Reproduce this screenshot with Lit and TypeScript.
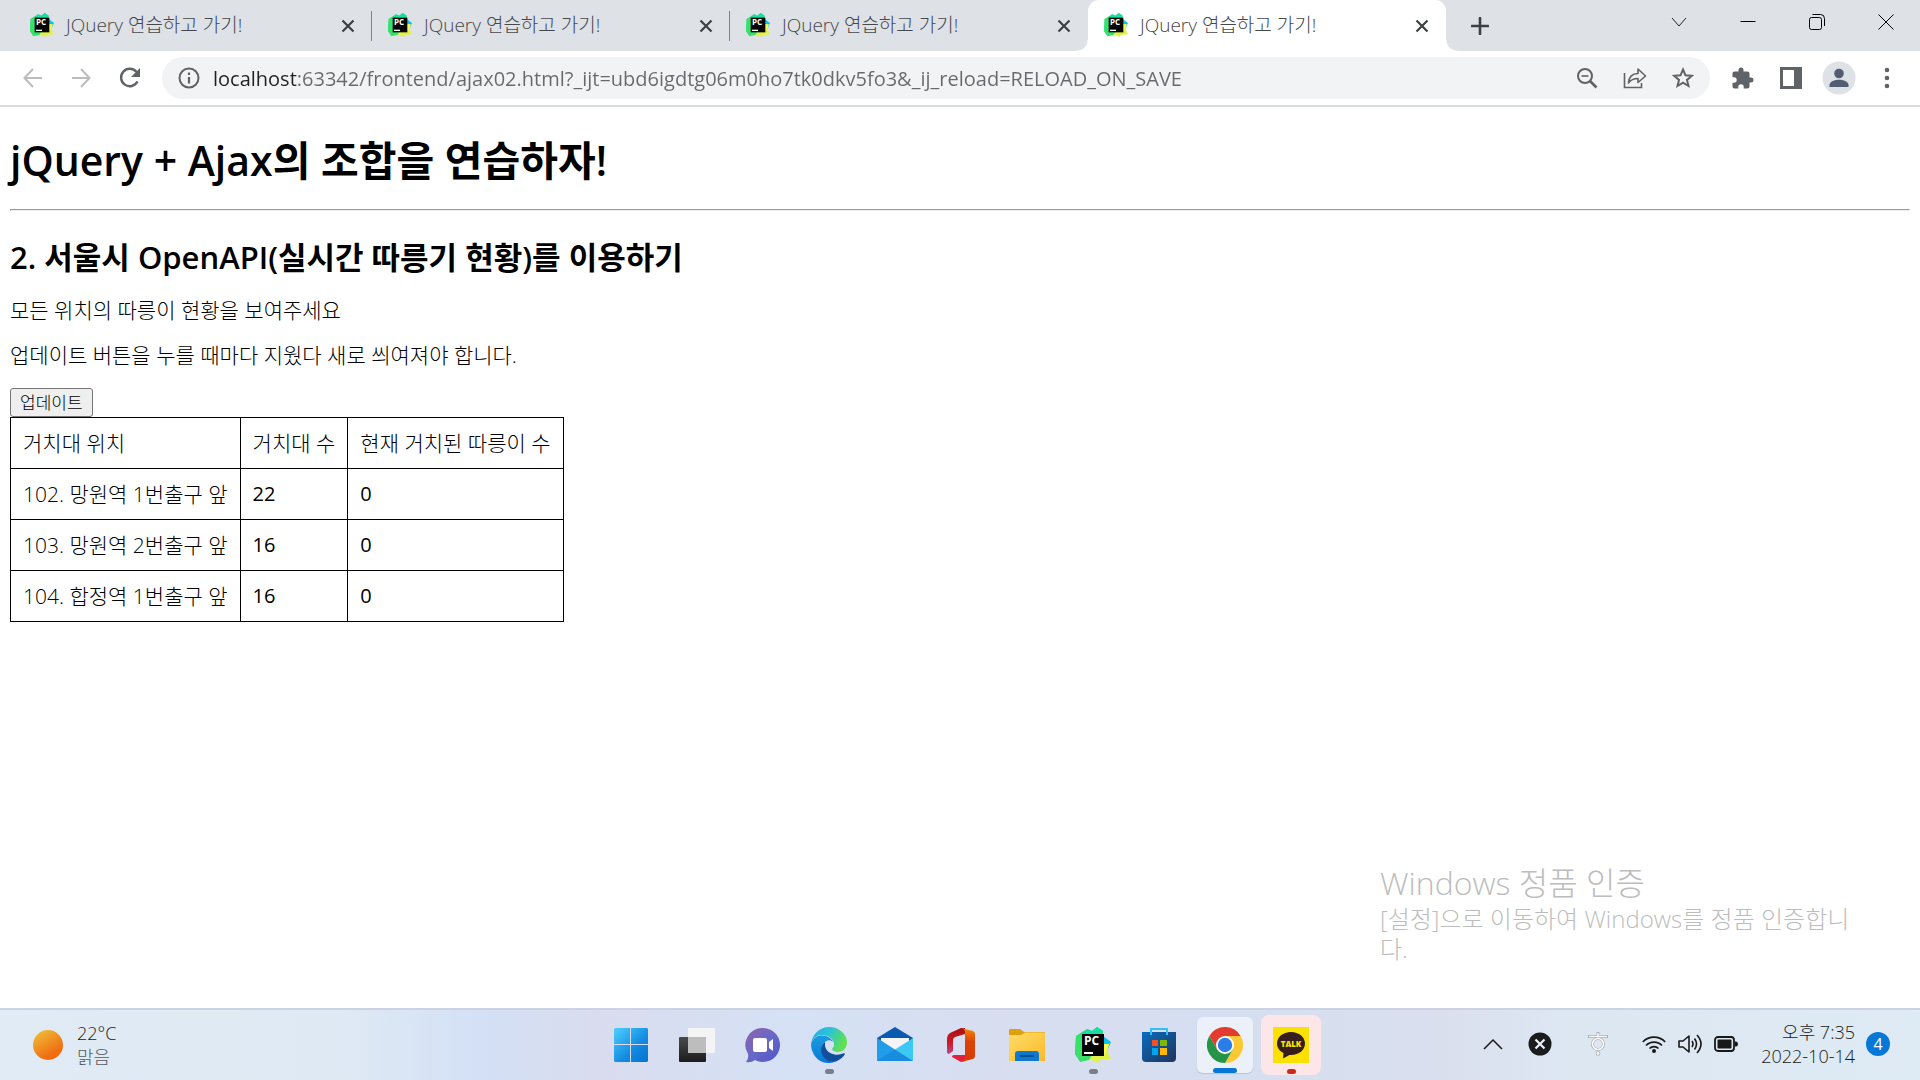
import { LitElement, html, css, svg, TemplateResult } from "lit";
import { customElement, property } from "lit/decorators.js";

const pycharm = (size: number) => html`
  <svg width=${size} height=${size} viewBox="0 0 36 36" aria-hidden="true">
    <path d="M1 9 12 2 17 4 22 0 28 4 27 30 4 33 0 27z" fill="#21d789" />
    <path d="M1 9 8 6 7 33 0 27z" fill="#35e36a" />
    <path d="M12 2 17 4 22 0 28 4 25 9 9 9z" fill="#16dfa0" />
    <path d="M28 9 36 15 32 24 27 20z" fill="#07c3f2" />
    <path d="M28 17 34 17 32 24 36 32 25 33 23 36 14 32 6 35 8 26z" fill="#e0f24a" />
    <path d="M8 26 17 28 14 33 5 35 1 28z" fill="#3ddf6c" />
    <path d="M28 17 34 17 32 24 28 28z" fill="#fcf84a" />
    <rect x="7" y="7" width="22" height="22" fill="#050505" />
    <rect x="9" y="25" width="9" height="2" fill="#fff" />
    <text x="9" y="18" class="pc-letters">PC</text>
  </svg>`;

const pcLetters = css`
  .pc-letters {
    font: 700 12px "Open Sans", "Noto Sans", sans-serif;
    fill: #fff;
  }
`;

const controls = css`
  :host {
    display: block;
  }
  button {
    display: flex;
    align-items: center;
    justify-content: center;
    padding: 0;
    border: 0;
    background: none;
    font: inherit;
    color: inherit;
  }
  svg {
    display: block;
    flex: none;
  }
`;

@customElement("browser-tabs")
class BrowserTabs extends LitElement {
  @property({ type: Array }) titles: string[] = [];
  @property({ type: Number }) active = 0;

  static styles = [
    controls,
    pcLetters,
    css`
      .strip {
        display: flex;
        height: 51px;
        padding-left: 14px;
        background: #dee1e6;
        color: #45484d;
        font-size: 19px;
        line-height: 24px;
      }
      .tab {
        position: relative;
        display: flex;
        flex: 0 1 358px;
        align-items: center;
        box-sizing: border-box;
        min-width: 0;
        padding: 0 14px 0 16px;
      }
      .tab.divided::after {
        content: "";
        position: absolute;
        right: 0;
        top: 11px;
        bottom: 10px;
        width: 1px;
        background: #808387;
      }
      .tab.active {
        background: #fff;
        border-radius: 11px 11px 0 0;
      }
      .tab.active::before,
      .tab.active::after {
        content: "";
        position: absolute;
        bottom: 0;
        width: 11px;
        height: 11px;
      }
      .tab.active::before {
        right: 100%;
        background: radial-gradient(circle at 0 0, transparent 10px, #fff 11px);
      }
      .tab.active::after {
        left: 100%;
        background: radial-gradient(circle at 100% 0, transparent 10px, #fff 11px);
      }
      .title {
        flex: 1;
        justify-content: flex-start;
        gap: 12px;
        min-width: 0;
        height: 100%;
        padding-bottom: 2px;
        white-space: nowrap;
      }
      .close {
        width: 20px;
        height: 20px;
      }
      .add {
        width: 34px;
        margin-left: 17px;
      }
      .window {
        display: flex;
        margin-left: auto;
      }
      .window button {
        width: 69px;
        height: 43px;
      }
    `,
  ];

  render() {
    return html`
      <div class="strip">
        ${this.titles.map(
          (title, i) => html`
            <div class="tab ${i === this.active ? "active" : i < this.active - 1 ? "divided" : ""}">
              <button class="title">${pycharm(24)}<span>${title}</span></button>
              <button class="close" aria-label="Close tab">
                <svg width="14" height="14" viewBox="0 0 14 14"><path d="M1.500 1.500 12.500 12.500M12.500 1.500 1.500 12.500" stroke="#3c4043" stroke-width="2.200" /></svg>
              </button>
            </div>`
        )}
        <button class="add" aria-label="New tab">
          <svg width="18" height="18" viewBox="0 0 18 18"><path d="M9 1V17M1 9H17" stroke="#3c4043" stroke-width="2.600" stroke-linecap="round" /></svg>
        </button>
        <div class="window">
          <button aria-label="Search tabs">
            <svg width="16" height="16" viewBox="0 0 16 16" fill="none" stroke="#222"><path d="M1 4 8 12 15 4" /></svg>
          </button>
          <button aria-label="Minimize">
            <svg width="16" height="16" viewBox="0 0 16 16"><path d="M.5 7.500H15.500" stroke="#000" /></svg>
          </button>
          <button aria-label="Restore">
            <svg width="16" height="16" viewBox="0 0 16 16" fill="none" stroke="#000"><rect x=".5" y="3.500" width="12" height="12" rx="2" /><path d="M3.500 .5H11.500Q15.500 .5 15.500 4.500V12" /></svg>
          </button>
          <button aria-label="Close">
            <svg width="16" height="16" viewBox="0 0 16 16"><path d="M.5 .5 15.500 15.500M15.500 .5 .5 15.500" stroke="#000" /></svg>
          </button>
        </div>
      </div>`;
  }
}

@customElement("browser-toolbar")
class BrowserToolbar extends LitElement {
  @property() url = "";

  static styles = [
    controls,
    css`
      .bar {
        display: flex;
        align-items: center;
        padding: 6px 9px;
        border-bottom: 2px solid #dadbde;
        background: #fff;
      }
      .nav {
        width: 48px;
        height: 42px;
      }
      .nav.reload {
        width: 50px;
        margin-right: 7px;
      }
      .box {
        display: flex;
        flex: 1;
        align-items: center;
        height: 42px;
        padding: 0 3px 0 16px;
        border-radius: 21px;
        background: #f1f3f4;
      }
      .box .nav.info {
        width: 22px;
      }
      .address {
        flex: 1;
        min-width: 0;
        height: 42px;
        margin-left: 13px;
        padding: 0;
        border: 0;
        outline: 0;
        font-family: inherit;
        font-size: 20px;
        color: transparent;
        background: linear-gradient(90deg, #202124 84px, #666a6e 84px);
        -webkit-background-clip: text;
        background-clip: text;
      }
      .side {
        margin-left: 9px;
        display: flex;
      }
    `,
  ];

  render() {
    return html`
      <div class="bar">
        <button class="nav" aria-label="Back">
          <svg width="20" height="20" viewBox="0 0 20 20" fill="none" stroke="#babcbe" stroke-width="2"><path d="M19 10H2M10 1 1.500 10 10 19" /></svg>
        </button>
        <button class="nav" aria-label="Forward">
          <svg width="20" height="20" viewBox="0 0 20 20" fill="none" stroke="#babcbe" stroke-width="2"><path d="M1 10H18M10 1 18.500 10 10 19" /></svg>
        </button>
        <button class="nav reload" aria-label="Reload">
          <svg width="22" height="22" viewBox="0 0 22 22"><path d="M18.500 14.500A8.700 8.700 0 1 1 17.500 5" fill="none" stroke="#5f6368" stroke-width="2.400" /><path d="M21 1V10H12z" fill="#5f6368" /></svg>
        </button>
        <div class="box">
          <button class="nav info" aria-label="View site information">
            <svg width="22" height="22" viewBox="0 0 22 22"><circle cx="11" cy="11" r="9.500" fill="none" stroke="#5f6368" stroke-width="2" /><path d="M11 10V16.500M11 5.500V8" stroke="#5f6368" stroke-width="2.200" /></svg>
          </button>
          <input class="address" aria-label="Address" spellcheck="false" .value=${this.url} />
          <button class="nav" aria-label="Zoom">
            <svg width="22" height="22" viewBox="0 0 22 22" fill="none" stroke="#5f6368" stroke-width="2"><circle cx="9" cy="9" r="7" /><path d="M14 14 20.500 20.500" stroke-width="2.600" /><path d="M5.500 9H12.500" stroke-width="1.600" /></svg>
          </button>
          <button class="nav" aria-label="Share">
            <svg width="24" height="24" viewBox="0 0 24 24" fill="none" stroke="#5f6368" stroke-width="1.600"><path d="M1.500 7V21.500H18.500V17" /><path d="M5.500 17C6 11 9 7.500 15 7.500V3L22.500 10 15 16.500V12.500C11 12.500 8 13.500 5.500 17z" stroke-linejoin="round" /></svg>
          </button>
          <button class="nav" aria-label="Bookmark">
            <svg width="24" height="24" viewBox="0 0 24 24" fill="none" stroke="#5f6368" stroke-width="2"><path d="M12 3.500 14.500 9.300 20.800 9.800 16 13.900 17.500 20 12 16.700 6.500 20 8 13.900 3.200 9.800 9.500 9.300z" /></svg>
          </button>
        </div>
        <div class="side">
          <button class="nav" aria-label="Extensions">
            <svg width="24" height="24" viewBox="0 0 24 24"><path transform="translate(-.5 .5)" d="M20.500 11H19V7c0-1.100-.9-2-2-2h-4V3.500a2.500 2.500 0 0 0-5 0V5H4c-1.100 0-2 .9-2 2v3.800h1.500a2.700 2.700 0 0 1 0 5.400H2V20c0 1.100.9 2 2 2h3.800v-1.500a2.700 2.700 0 0 1 5.400 0V22H17c1.100 0 2-.9 2-2v-4h1.500a2.500 2.500 0 0 0 0-5z" fill="#5f6368" /></svg>
          </button>
          <button class="nav" aria-label="Side panel">
            <svg width="22" height="22" viewBox="0 0 22 22"><path d="M0 0H22V22H0zM3 3V19H14V3z" fill="#5f6368" fill-rule="evenodd" /></svg>
          </button>
          <button class="nav" aria-label="Profile">
            <svg width="34" height="34" viewBox="0 0 34 34"><circle cx="17" cy="17" r="16.500" fill="#dee1e6" /><circle cx="17" cy="12.500" r="4.800" fill="#525d73" /><path d="M7.500 26V24C7.500 20.500 13 18.800 17 18.800S26.500 20.500 26.500 24V26z" fill="#525d73" /></svg>
          </button>
          <button class="nav" aria-label="Menu">
            <svg width="6" height="22" viewBox="0 0 6 22" fill="#5f6368"><circle cx="3" cy="3" r="2.300" /><circle cx="3" cy="11" r="2.300" /><circle cx="3" cy="19" r="2.300" /></svg>
          </button>
        </div>
      </div>`;
  }
}

interface Station {
  name: string;
  racks: number;
  bikes: number;
}

@customElement("bike-page")
class BikePage extends LitElement {
  stations: Station[] = [
    { name: "102. 망원역 1번출구 앞", racks: 22, bikes: 0 },
    { name: "103. 망원역 2번출구 앞", racks: 16, bikes: 0 },
    { name: "104. 합정역 1번출구 앞", racks: 16, bikes: 0 },
  ];

  static styles = css`
    :host {
      display: block;
      padding: 0 10px;
      color: #000;
      font-size: 21px;
      line-height: 25px;
    }
    h1 {
      margin: 28px 0 23px;
      font-size: 41px;
      font-weight: 600;
      line-height: 51px;
    }
    hr {
      margin: 0;
      border: 1px solid;
      border-color: #9a9a9a #eee #eee #9a9a9a;
    }
    h2 {
      margin: 26px 0 21px;
      font-size: 31px;
      font-weight: 600;
      line-height: 40px;
    }
    p {
      margin: 0 0 20px;
    }
    button {
      display: block;
      height: 29px;
      padding: 0 9px;
      border: 1px solid #767676;
      border-radius: 3px;
      background: #efefef;
      color: #000;
      font-family: inherit;
      font-weight: inherit;
      font-size: 17px;
      line-height: 24px;
    }
    table {
      border-collapse: collapse;
    }
    td {
      padding: 12px;
      border: 1px solid #000;
      line-height: 26px;
    }
    .count {
      font-size: 20px;
      font-weight: 400;
    }
  `;

  render() {
    return html`
      <h1>jQuery + Ajax의 조합을 연습하자!</h1>
      <hr />
      <h2>2. 서울시 OpenAPI(실시간 따릉기 현황)를 이용하기</h2>
      <p>모든 위치의 따릉이 현황을 보여주세요</p>
      <p>업데이트 버튼을 누를 때마다 지웠다 새로 씌여져야 합니다.</p>
      <button>업데이트</button>
      <table>
        <thead>
          <tr><td>거치대 위치</td><td>거치대 수</td><td>현재 거치된 따릉이 수</td></tr>
        </thead>
        <tbody>
          ${this.stations.map((s) => html`<tr><td>${s.name}</td><td class="count">${s.racks}</td><td class="count">${s.bikes}</td></tr>`)}
        </tbody>
      </table>`;
  }
}

interface TaskApp {
  name: string;
  icon: TemplateResult;
  state?: "running" | "focused" | "alert";
}

const icon = (body: TemplateResult) => html`<svg width="36" height="36" viewBox="0 0 36 36" aria-hidden="true">${body}</svg>`;

const apps: TaskApp[] = [
  {
    name: "Start",
    icon: icon(svg`
      <defs><linearGradient id="win" gradientUnits="userSpaceOnUse" x1="1" y1="1" x2="35" y2="35"><stop offset="0" stop-color="#4fd0ff" /><stop offset=".6" stop-color="#128be0" /><stop offset="1" stop-color="#0672cf" /></linearGradient></defs>
      <path d="M2 1H17V17H1V2zM18 1H34L35 2V17H18zM1 18H17V35H2L1 34zM18 18H35V34L34 35H18z" fill="url(#win)" />`),
  },
  {
    name: "Task view",
    icon: icon(svg`
      <defs><linearGradient id="dark" x1="0" y1="0" x2="0" y2="1"><stop offset="0" stop-color="#4a4a4a" /><stop offset="1" stop-color="#1c1c1c" /></linearGradient></defs>
      <rect x="0" y="10" width="27" height="25" rx="1" fill="url(#dark)" />
      <rect x="9" y="1" width="27" height="25" rx="1" fill="#f4f4f4" />
      <rect x="9" y="10" width="18" height="16" fill="#bdbdbd" />`),
  },
  {
    name: "Chat",
    icon: icon(svg`
      <defs><linearGradient id="chat" x1="0" y1="0" x2="1" y2="1"><stop offset="0" stop-color="#9064a8" /><stop offset=".5" stop-color="#6868c8" /><stop offset="1" stop-color="#5054c8" /></linearGradient></defs>
      <path d="M18 1A17 17 0 1 1 10 33Q6 36 1 35Q4 31 3 27A17 17 0 0 1 18 1z" fill="url(#chat)" />
      <rect x="8" y="11" width="14" height="14" rx="2" fill="#fff" /><path d="M24 15 28 12V24L24 21z" fill="#fff" />`),
  },
  {
    name: "Edge",
    state: "running",
    icon: icon(svg`
      <defs>
        <linearGradient id="edge-top" x1="0" y1="0" x2="1" y2=".4"><stop offset="0" stop-color="#2aa8e8" /><stop offset=".5" stop-color="#2cc3d8" /><stop offset="1" stop-color="#5fe050" /></linearGradient>
        <linearGradient id="edge-left" x1="0" y1="0" x2="0" y2="1"><stop offset="0" stop-color="#1a9ce0" /><stop offset="1" stop-color="#0a78d4" /></linearGradient>
      </defs>
      <path d="M0 17C1 7 9 0 18 0C29 0 36 8 36 15C36 21 32 25 27 25C23 25 21 23.500 21 22C21 21 23 20 23 17.500C23 12 17 8 11 8C6 8 2 11 0 17z" fill="url(#edge-top)" />
      <path d="M0 17C2 11 6 8.500 11 8.500C17 8.500 21 12 22 15C16 11 11 16 11 22C11 29 16 34 23 35.200C10 39 0 29 0 17z" fill="url(#edge-left)" />
      <path d="M14 15C10 18 9 24 12 29C14.500 33 20 36 25 34.500C29 33 32.500 30 34 27C34 26 33 26 32 26.500C24 30 14 25 14 15z" fill="#114f9c" />
      <path d="M18 13.500C21 13.500 23 15.500 23 18C23 20 21 21 21 22.200C21 23.600 23 25 27 25C30 25 32 24.300 33 23.500C31.500 26.500 28.500 27.500 25.500 27.500C19 27.500 14 23 14 18C14 15.500 15.500 13.500 18 13.500z" fill="#d6e0f5" />`),
  },
  {
    name: "Mail",
    icon: icon(svg`
      <path d="M0 11 18 0 36 11V14H0z" fill="#0a5bb0" />
      <path d="M4 11H32V18L18 26 4 18z" fill="#f4f4f6" />
      <path d="M0 11 18 22.500 36 34H0z" fill="#1f9de8" /><path d="M36 11V34L18 22.500z" fill="#3cc8f5" />
      <path d="M0 34 18 22.500 36 34z" fill="#1a8cdd" />`),
  },
  {
    name: "Office",
    icon: icon(svg`
      <defs>
        <linearGradient id="office-a" x1="0" y1="0" x2="0" y2="1"><stop offset="0" stop-color="#a80f14" /><stop offset=".6" stop-color="#d01c28" /><stop offset="1" stop-color="#b64a90" /></linearGradient>
        <linearGradient id="office-b" x1="0" y1="0" x2="0" y2="1"><stop offset="0" stop-color="#f58a00" /><stop offset=".4" stop-color="#dd4208" /><stop offset="1" stop-color="#d83b01" /></linearGradient>
      </defs>
      <path d="M18 1 7 6Q4 8 4 11V25Q4 27 6 27L10 24V13Q10 11 12 10L22 7V1z" fill="url(#office-a)" />
      <path d="M9 30Q9 28 11 28H22V34L18 35z" fill="#e0203c" />
      <path d="M18 1 30 4Q32 5 32 7V29Q32 31 30 32L18 35Q22 33 22 31V5Q22 2 18 1z" fill="url(#office-b)" />`),
  },
  {
    name: "File Explorer",
    icon: icon(svg`
      <defs><linearGradient id="folder" x1="0" y1="0" x2="1" y2="1"><stop offset="0" stop-color="#ffdc6a" /><stop offset="1" stop-color="#fbba28" /></linearGradient></defs>
      <path d="M0 3Q0 2 1 2H11L15 5H35Q36 5 36 6V12H0z" fill="#dfa00c" />
      <path d="M0 8H12L16 5.500H35Q36 5.500 36 7V34H0z" fill="url(#folder)" />
      <path d="M6 34V27Q6 24 9 24H27Q30 24 30 27V34z" fill="#0f78d0" /><rect x="11" y="28" width="14" height="2" fill="#0a4f94" />`),
  },
  { name: "PyCharm", state: "running", icon: pycharm(36) },
  {
    name: "Microsoft Store",
    icon: icon(svg`
      <defs><linearGradient id="store" x1="0" y1="0" x2="1" y2="1"><stop offset="0" stop-color="#0a6cc0" /><stop offset="1" stop-color="#20345c" /></linearGradient></defs>
      <path d="M1 5H35V31Q35 35 31 35H5Q1 35 1 31z" fill="url(#store)" />
      <path d="M10 8V2H26V8" fill="none" stroke="#30c0f4" stroke-width="2" />
      <path d="M11 13H17V19H11z" fill="#f25022" /><path d="M19 13H26V19H19z" fill="#7fba00" /><path d="M11 21H17V28H11z" fill="#00a4ef" /><path d="M19 21H26V28H19z" fill="#ffb900" />`),
  },
  {
    name: "Chrome",
    state: "focused",
    icon: icon(svg`
      <path d="M18 18 2.400 9A18 18 0 0 1 33.600 9z" fill="#e33b2e" />
      <path d="M18 9H33.600A18 18 0 0 1 18 36L25.800 22.500z" fill="#fcc934" />
      <path d="M2.400 9 10.200 22.500 18 27 25.800 22.500 18 36A18 18 0 0 1 2.400 9z" fill="#249548" />
      <path d="M10.200 22.500 2.400 9 18 9z" fill="#e33b2e" />
      <circle cx="18" cy="18" r="9" fill="#fff" /><circle cx="18" cy="18" r="7.200" fill="#2b7de9" />`),
  },
  {
    name: "KakaoTalk",
    state: "alert",
    icon: icon(svg`
      <rect width="36" height="36" fill="#fae100" />
      <path d="M18 5C26 5 32 10 32 16.500S26 28 18 28L16.500 27.900 10 31.500 10.500 26C6.500 24 4 20.500 4 16.500C4 10 10 5 18 5z" fill="#371d1e" />
      <text x="18" y="20" text-anchor="middle" class="talk">TALK</text>`),
  },
];

@customElement("task-bar")
class TaskBar extends LitElement {
  static styles = [
    controls,
    pcLetters,
    css`
      .bar {
        display: grid;
        grid-template-columns: 1fr auto 1fr;
        align-items: center;
        height: 70px;
        border-top: 2px solid #cbd3e3;
        background: linear-gradient(
          90deg,
          #e0ebf6 0,
          #dfeaf3 12%,
          #dfe9f4 18%,
          #d3e0f6 25%,
          #d9dcee 31%,
          #d5e1f5 41%,
          #d8def0 52%,
          #d5dff1 64%,
          #dadfee 75%,
          #dde7f2 82%,
          #deeaf4 100%
        );
        color: #191919;
        font-size: 18px;
        line-height: 24px;
      }
      .weather {
        display: flex;
        justify-self: start;
        gap: 14px;
        margin-left: 33px;
        text-align: left;
      }
      .weather small {
        display: block;
        font-size: 18px;
        color: #55595f;
      }
      .apps {
        display: flex;
        gap: 6px;
        padding-left: 2px;
      }
      .app {
        position: relative;
        width: 60px;
        height: 60px;
        border-radius: 8px;
      }
      .app.focused {
        width: 56px;
        height: 56px;
        margin: 2px;
        border-radius: 6px;
        background: #ebf0f9;
        box-shadow: 0 1px 1px #b9c2d4;
      }
      .app.alert {
        background: #fde6e7;
      }
      .app.running::after,
      .app.focused::after,
      .app.alert::after {
        content: "";
        position: absolute;
        bottom: 1px;
        left: 50%;
        width: 9px;
        height: 5px;
        margin-left: -4px;
        border-radius: 3px;
        background: #7b7f88;
      }
      .app.focused::after {
        bottom: 0;
        width: 24px;
        margin-left: -12px;
        background: #0578d7;
      }
      .app.alert::after {
        background: #c92a1c;
      }
      .talk {
        font: 800 8px "Open Sans", "Noto Sans", sans-serif;
        fill: #fae100;
      }
      .tray {
        display: flex;
        justify-self: end;
        align-items: center;
        margin-right: 30px;
        padding-bottom: 2px;
      }
      .chevron {
        margin-right: 25px;
      }
      .ime {
        margin: 0 34px 0 36px;
      }
      .status {
        gap: 12px;
      }
      .clock {
        margin: 0 11px 0 23px;
        text-align: right;
      }
      .clock span {
        display: block;
      }
      .badge {
        width: 24px;
        height: 24px;
        border-radius: 50%;
        background: #0578d7;
        color: #fff;
        font-size: 16px;
        font-weight: 400;
      }
    `,
  ];

  render() {
    return html`
      <div class="bar">
        <button class="weather">
          <svg width="30" height="30" viewBox="0 0 30 30" aria-hidden="true">
            <defs><linearGradient id="sun" x1=".2" y1="0" x2=".8" y2="1"><stop offset="0" stop-color="#f0bc38" /><stop offset=".8" stop-color="#f06c10" /></linearGradient></defs>
            <circle cx="15" cy="15" r="15" fill="url(#sun)" />
          </svg>
          <span>22°C<small>맑음</small></span>
        </button>
        <div class="apps">
          ${apps.map((a) => html`<button class="app ${a.state ?? ""}" aria-label=${a.name}>${a.icon}</button>`)}
        </div>
        <div class="tray">
          <button class="chevron" aria-label="Show hidden icons">
            <svg width="20" height="12" viewBox="0 0 20 12" fill="none" stroke="#191919" stroke-width="1.500"><path d="M1 11 10 2 19 11" /></svg>
          </button>
          <button aria-label="Blocked">
            <svg width="24" height="24" viewBox="0 0 24 24"><circle cx="12" cy="12" r="11.500" fill="#191b1d" /><path d="M7.500 7.500 16.500 16.500M16.500 7.500 7.500 16.500" stroke="#eef2f6" stroke-width="2.200" /></svg>
          </button>
          <button class="ime" aria-label="Input method">
            <svg width="20" height="24" viewBox="0 0 20 24">
              <g fill="none" stroke="#a9adb3" stroke-width="3"><path d="M10 0V4M0 4.500H20" /><circle cx="10" cy="12" r="5.500" /></g>
              <circle cx="10" cy="21.500" r="2.200" fill="#a9adb3" />
              <g fill="none" stroke="#f8fafc" stroke-width="1.600"><path d="M10 1V4M1 4.500H19" /><circle cx="10" cy="12" r="5.500" /></g>
              <circle cx="10" cy="21.500" r="1.400" fill="#f8fafc" />
            </svg>
          </button>
          <button class="status" aria-label="Network, volume and battery">
            <svg width="24" height="20" viewBox="0 0 24 20" fill="none" stroke="#191919" stroke-width="1.700"><path d="M.8 8A15.500 15.500 0 0 1 23.200 8M4 11.500A11 11 0 0 1 20 11.500M7.500 14.500A6.300 6.300 0 0 1 16.500 14.500" /><circle cx="12" cy="17" r="2" fill="#191919" stroke="none" /></svg>
            <svg width="24" height="20" viewBox="0 0 24 20" fill="none" stroke="#191919" stroke-width="1.600"><path d="M1 7H5L11 2V18L5 13H1z" stroke-linejoin="round" /><path d="M14 7Q16 10 14 13M16.500 4.500Q20.500 10 16.500 15.500M19 1Q27 10 19 19" /></svg>
            <svg width="24" height="16" viewBox="0 0 24 16"><rect x="1" y="1" width="19" height="14" rx="3" fill="none" stroke="#191919" stroke-width="1.800" /><rect x="3.500" y="3.500" width="14" height="9" rx="1" fill="#191919" /><path d="M21 5.500H22Q24 5.500 24 8T22 10.500H21z" fill="#191919" /></svg>
          </button>
          <button class="clock"><span><span>오후 7:35</span><span>2022-10-14</span></span></button>
          <button class="badge">4</button>
        </div>
      </div>`;
  }
}

@customElement("app-root")
class AppRoot extends LitElement {
  static styles = css`
    :host {
      display: flex;
      flex-direction: column;
      position: relative;
      min-height: 100vh;
      background: #fff;
      font-family: "Open Sans", "Noto Sans CJK KR", sans-serif;
      font-weight: 300;
    }
    bike-page {
      flex: 1;
    }
    .activation {
      position: absolute;
      right: 64px;
      bottom: 116px;
      width: 476px;
      color: #bdbdbd;
      font-size: 24px;
      line-height: 30px;
      word-break: break-all;
    }
    .activation strong {
      display: block;
      font-size: 32px;
      line-height: 42px;
      font-weight: inherit;
    }
  `;

  render() {
    const title = "JQuery 연습하고 가기!";
    return html`
      <browser-tabs .titles=${[title, title, title, title]} .active=${3}></browser-tabs>
      <browser-toolbar url="localhost:63342/frontend/ajax02.html?_ijt=ubd6igdtg06m0ho7tk0dkv5fo3&_ij_reload=RELOAD_ON_SAVE"></browser-toolbar>
      <bike-page></bike-page>
      <aside class="activation"><strong>Windows 정품 인증</strong>[설정]으로 이동하여 Windows를 정품 인증합니다.</aside>
      <task-bar></task-bar>`;
  }
}
